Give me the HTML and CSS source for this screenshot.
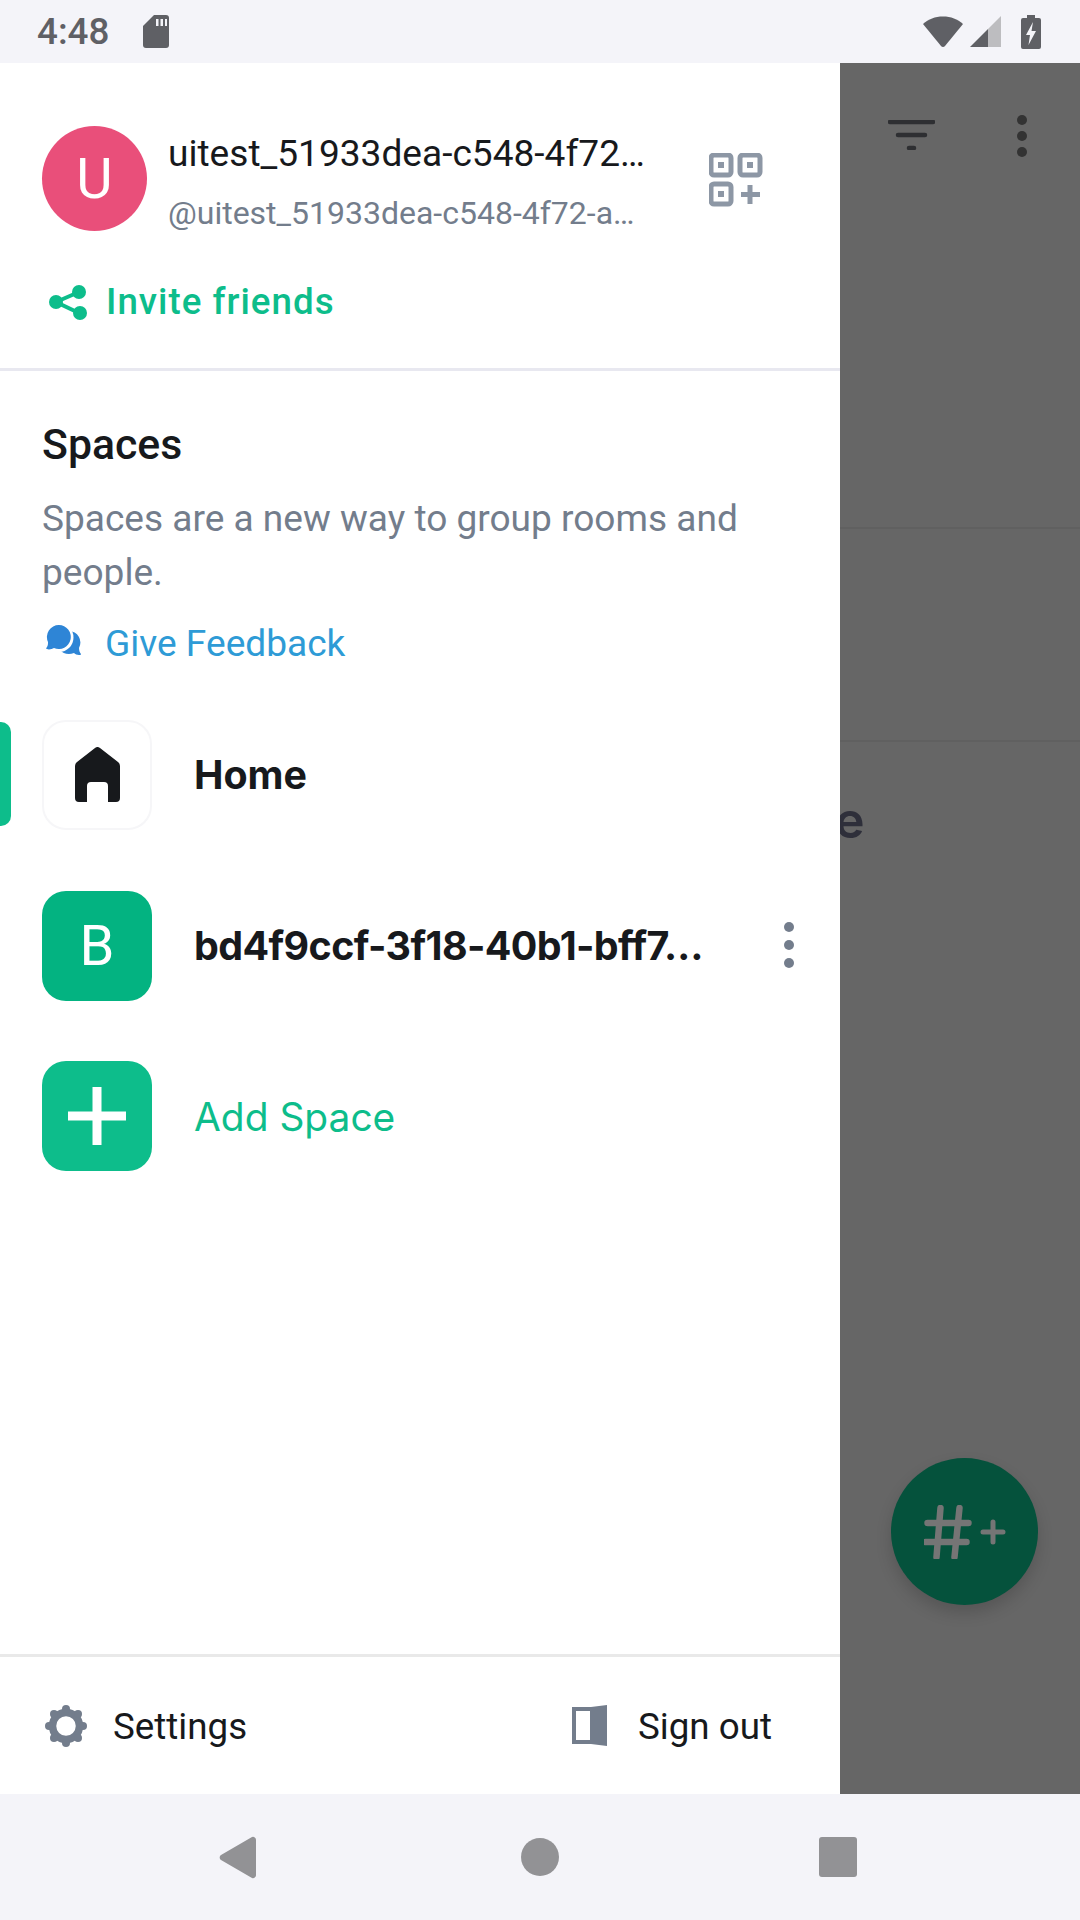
FILE: index.html
```html
<!DOCTYPE html>
<html lang="en">
<head>
    <meta charset="UTF-8">
    <title>Spaces drawer</title>
    <link rel="stylesheet" href="styles.css">
</head>
<body>
    <div class="screen">
        <div class="status-bar">
            <span class="clock">4:48</span>
            <svg class="sd-icon" width="26" height="33" viewBox="0 0 26 33"><path class="fill-status" d="M11 0h12a3 3 0 0 1 3 3v27a3 3 0 0 1-3 3H3a3 3 0 0 1-3-3V11z"/><path d="M13 4h2.500v7H13zM17.500 4H20v7h-2.500zM22 4h2v7h-2z" fill="#f4f4f9"/></svg>
            <div class="status-right">
                <svg width="42" height="32" viewBox="0 0 42 32"><path class="fill-status" d="M1 8C6.500 3 13 0.500 21 0.500S35.500 3 41 8L23 30a2.600 2.600 0 0 1-4 0z"/></svg>
                <svg class="signal" width="32" height="32" viewBox="0 0 32 32"><path d="M31 0v31H18V13z" fill="#bdbdc0"/><path class="fill-status" d="M18 13v18H0z"/></svg>
                <svg class="battery" width="20" height="34" viewBox="0 0 20 34"><path class="fill-status" d="M6 0h8v3h4a2 2 0 0 1 2 2v27a2 2 0 0 1-2 2H2a2 2 0 0 1-2-2V5a2 2 0 0 1 2-2h4z"/><path d="M12 7L5 20h4l-1.500 10L15 16h-4.500z" fill="#f4f4f9"/></svg>
            </div>
        </div>

        <div class="content">
            <div class="main">
                <div class="main-top">
                    <svg width="47" height="30" viewBox="0 0 47 30"><path d="M2 2h43M10 15h27M21 28h5" stroke="#2e2f32" stroke-width="4.500" stroke-linecap="round"/></svg>
                    <svg class="main-dots" width="10" height="42" viewBox="0 0 10 42"><circle cx="5" cy="5" r="5" fill="#333"/><circle cx="5" cy="21" r="5" fill="#333"/><circle cx="5" cy="37" r="5" fill="#333"/></svg>
                </div>
                <div class="main-row"></div>
                <div class="main-empty">e</div>
            </div>
            <div class="fab">
                <svg width="82" height="54" viewBox="0 0 82 54"><path d="M16.500 3l-4 49M35.500 3l-5 49M3.500 18h41M1.500 37h41" stroke="#757575" stroke-width="6.500" stroke-linecap="round" fill="none"/><path d="M69 17v20M59 27h20" stroke="#757575" stroke-width="5" stroke-linecap="round"/></svg>
            </div>

            <div class="drawer">
                <div class="profile">
                    <div class="profile-top">
                        <div class="avatar">U</div>
                        <div class="profile-names">
                            <div class="name">uitest_51933dea-c548-4f72…</div>
                            <div class="handle">@uitest_51933dea-c548-4f72-a…</div>
                        </div>
                        <svg class="qr-icon" width="54" height="54" viewBox="0 0 54 54">
                            <rect x="2" y="2" width="20" height="20" rx="3" class="qr-box"/>
                            <rect x="31" y="2" width="20" height="20" rx="3" class="qr-box"/>
                            <rect x="2" y="31" width="20" height="20" rx="3" class="qr-box"/>
                            <path d="M9 9h6v6H9zM38 9h6v6h-6zM9 38h6v6H9z" fill="#8d97a5"/>
                            <path d="M41 32v19M32 41.500h19" stroke="#8d97a5" stroke-width="5"/>
                        </svg>
                    </div>
                    <div class="invite">
                        <svg width="38" height="36" viewBox="0 0 38 36"><path d="M30 8L7 18l23 11" stroke="#0dbd8b" stroke-width="4" fill="none"/><circle cx="30" cy="8" r="7" fill="#0dbd8b"/><circle cx="7" cy="18" r="7" fill="#0dbd8b"/><circle cx="31" cy="29" r="7" fill="#0dbd8b"/></svg>
                        <span>Invite friends</span>
                    </div>
                </div>

                <div class="spaces">
                    <h2>Spaces</h2>
                    <p>Spaces are a new way to group rooms and people.</p>
                    <div class="feedback">
                        <svg width="36" height="32" viewBox="0 0 36 32"><path d="M23 6a11.500 11.500 0 0 1 10 17c0 3 1 5 2 6 0 1-1 1-2 1-2 0-4-1-5-2-5 2-11 1-14-3z" fill="#2e85d6"/><circle cx="13" cy="12.500" r="14.500" fill="#fff"/><path d="M13 0a12 12 0 1 1-5 23c-2 1-5 2-7 1-1 0-1-1 0-2 1-2 1-3 1-5A12 12 0 0 1 13 0z" fill="#2e85d6"/></svg>
                        <span>Give Feedback</span>
                    </div>
                </div>

                <div class="space-list">
                    <div class="space-row home-row">
                        <div class="selected-bar"></div>
                        <div class="tile tile-home">
                            <svg width="47" height="56" viewBox="0 0 47 56"><path d="M21 1a4 4 0 0 1 5 0l18 14a5 5 0 0 1 2 4v32a4 4 0 0 1-4 4H34V39a4 4 0 0 0-4-4H17a4 4 0 0 0-4 4v16H5a4 4 0 0 1-4-4V19a5 5 0 0 1 2-4z" fill="#17191c"/></svg>
                        </div>
                        <div class="space-name">Home</div>
                    </div>
                    <div class="space-row">
                        <div class="tile tile-b">B</div>
                        <div class="space-name tight">bd4f9ccf-3f18-40b1-bff7…</div>
                        <svg class="space-dots" width="10" height="46" viewBox="0 0 10 46"><circle cx="5" cy="5" r="5" fill="#737d8c"/><circle cx="5" cy="23" r="5" fill="#737d8c"/><circle cx="5" cy="41" r="5" fill="#737d8c"/></svg>
                    </div>
                    <div class="space-row">
                        <div class="tile tile-add">
                            <svg width="60" height="60" viewBox="0 0 60 60"><path d="M30 1v58M1 30h58" stroke="#fff" stroke-width="9"/></svg>
                        </div>
                        <div class="add-label">Add Space</div>
                    </div>
                </div>

                <div class="drawer-footer">
                    <div class="footer-item">
                        <svg width="42" height="42" viewBox="0 0 42 42"><circle cx="21" cy="21" r="13.500" fill="none" stroke="#737d8c" stroke-width="7.500"/><g fill="#737d8c"><circle cx="21" cy="4" r="4"/><circle cx="21" cy="38" r="4"/><circle cx="4" cy="21" r="4"/><circle cx="38" cy="21" r="4"/><circle cx="9" cy="9" r="4"/><circle cx="33" cy="9" r="4"/><circle cx="9" cy="33" r="4"/><circle cx="33" cy="33" r="4"/></g></svg>
                        <span>Settings</span>
                    </div>
                    <div class="footer-item signout">
                        <svg width="36" height="42" viewBox="0 0 36 42"><path d="M0 2h19L35 0v41l-16-2H0z" fill="#737d8c"/><path d="M4 6h14v29H4z" fill="#fff"/></svg>
                        <span>Sign out</span>
                    </div>
                </div>
            </div>
        </div>

        <div class="nav-bar">
            <svg width="38" height="43" viewBox="0 0 38 43"><path d="M33 1a3 3 0 0 1 4 3v35a3 3 0 0 1-4 3L2 24a3 3 0 0 1 0-5z" class="fill-nav"/></svg>
            <div class="nav-home"></div>
            <div class="nav-square"></div>
        </div>
    </div>
</body>
</html>
```

FILE: styles.css
```css
* {
    box-sizing: border-box;
}

body {
    margin: 0;
    font-family: Roboto, sans-serif;
    background: #f4f4f9;
}

svg {
    display: block;
    flex-shrink: 0;
}

.screen {
    width: 1080px;
    height: 1920px;
    display: flex;
    flex-direction: column;
    overflow: hidden;
}

.fill-status {
    fill: #5f6065;
}

.fill-nav {
    fill: #929295;
}

/* status bar */
.status-bar {
    height: 63px;
    display: flex;
    align-items: center;
    padding: 0 39px 0 37px;
}

.clock {
    font-size: 36.750px;
    font-weight: 500;
    color: #5f6065;
}

.sd-icon {
    margin-left: 34px;
}

.status-right {
    margin-left: auto;
    display: flex;
    align-items: center;
}

.signal {
    margin-left: 6px;
}

.battery {
    margin-left: 19px;
}

/* page behind the drawer */
.content {
    position: relative;
    flex: 1;
    background: #666;
}

.main {
    padding-left: 840px;
}

.main-top {
    height: 466px;
    border-bottom: 2px solid #606060;
    display: flex;
    align-items: flex-start;
    padding: 57px 53px 0 48px;
    justify-content: space-between;
}

.main-dots {
    margin-top: -5px;
}

.main-row {
    height: 213px;
    border-bottom: 2px solid #606060;
}

.main-empty {
    margin-left: -5px;
    margin-top: 48px;
    font-family: Inter, sans-serif;
    font-size: 50px;
    font-weight: 600;
    line-height: 60px;
    color: #2e2f3a;
}

.fab {
    position: absolute;
    left: 891px;
    top: 1395px;
    width: 147px;
    height: 147px;
    border-radius: 50%;
    background: #05523c;
    box-shadow: 0 8px 16px rgba(0, 0, 0, 0.16);
    display: flex;
    align-items: center;
    justify-content: center;
}

/* drawer */
.drawer {
    position: absolute;
    left: 0;
    top: 0;
    bottom: 0;
    width: 840px;
    background: #fff;
    display: flex;
    flex-direction: column;
}

.profile {
    height: 308px;
    border-bottom: 3px solid #e8e8f0;
    padding: 63px 0 0 42px;
}

.profile-top {
    display: flex;
    align-items: center;
}

.avatar {
    width: 105px;
    height: 105px;
    border-radius: 50%;
    background: #e94f7a;
    color: #fff;
    font-size: 56px;
    display: flex;
    align-items: center;
    justify-content: center;
    flex-shrink: 0;
}

.profile-names {
    width: 481px;
    margin-left: 21px;
}

.name {
    font-size: 37.100px;
    line-height: 55px;
    color: #17191c;
    white-space: nowrap;
}

.handle {
    margin-top: 14px;
    font-size: 32px;
    line-height: 36px;
    color: #737d8c;
    white-space: nowrap;
}

.qr-icon {
    margin-left: 60px;
    margin-top: 2px;
}

.qr-box {
    fill: none;
    stroke: #8d97a5;
    stroke-width: 5;
}

.invite {
    margin-top: 49px;
    margin-left: 7px;
    display: flex;
    align-items: center;
    font-size: 36.750px;
    font-weight: 500;
    letter-spacing: 1px;
    color: #0dbd8b;
}

.invite span {
    margin-left: 19px;
}

.spaces {
    padding: 48px 42px 0;
}

.spaces h2 {
    margin: 0;
    font-size: 42.800px;
    font-weight: 500;
    line-height: 50px;
    color: #17191c;
}

.spaces p {
    margin: 23px 0 0;
    font-size: 37.050px;
    line-height: 53.500px;
    color: #737d8c;
}

.feedback {
    margin-top: 20px;
    display: flex;
    align-items: center;
    font-size: 37.100px;
    line-height: 50px;
    color: #2e9bd6;
}

.feedback svg {
    margin: -6px 0 0 4px;
}

.feedback span {
    margin-left: 23px;
}

.space-list {
    margin-top: 51px;
    display: flex;
    flex-direction: column;
    gap: 60.500px;
    padding-left: 42px;
    flex: 1;
}

.space-row {
    position: relative;
    height: 110px;
    display: flex;
    align-items: center;
}

.selected-bar {
    position: absolute;
    left: -42px;
    top: 2px;
    width: 11px;
    height: 104px;
    background: #0dbd8b;
    border-radius: 0 10px 10px 0;
}

.tile {
    width: 110px;
    height: 110px;
    border-radius: 24px;
    display: flex;
    align-items: center;
    justify-content: center;
    flex-shrink: 0;
    color: #fff;
    font-size: 56px;
}

.tile-home {
    border: 2px solid #f6f6f8;
}

.tile-b {
    background: #03b381;
}

.tile-add {
    background: #0dbd8b;
}

.space-name {
    margin-left: 42px;
    font-family: Inter, sans-serif;
    font-size: 39.400px;
    font-weight: 700;
    color: #17191c;
    white-space: nowrap;
}

.tight {
    letter-spacing: -0.600px;
}

.space-dots {
    margin-left: auto;
    margin-right: 46px;
    margin-top: -2px;
}

.add-label {
    margin-left: 42px;
    font-family: Inter, sans-serif;
    font-size: 38.900px;
    color: #0dbd8b;
}

.drawer-footer {
    height: 140px;
    border-top: 3px solid #e9e9e9;
    display: flex;
    align-items: center;
    justify-content: space-between;
    padding: 0 68px 0 45px;
}

.footer-item {
    display: flex;
    align-items: center;
    font-size: 36.750px;
    color: #17191c;
}

.footer-item span {
    margin-left: 26px;
    margin-top: 2px;
}

.signout span {
    margin-left: 30px;
}

/* nav bar */
.nav-bar {
    height: 126px;
    position: relative;
    display: flex;
    align-items: center;
    padding-left: 219px;
}

.nav-home {
    width: 38px;
    height: 38px;
    border-radius: 50%;
    background: #929295;
    margin-left: 264px;
}

.nav-square {
    width: 38px;
    height: 40px;
    border-radius: 3px;
    background: #929295;
    margin-left: 260px;
}
```
